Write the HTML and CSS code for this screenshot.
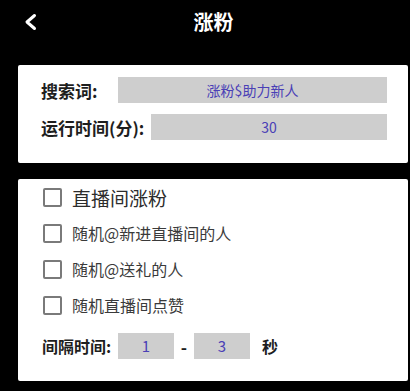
FILE: index.html
```html
<!DOCTYPE html>
<html lang="zh">
<head>
<meta charset="utf-8">
<link rel="stylesheet" href="styles.css">
</head>
<body>
<header class="topbar">
  <span class="back">
    <svg width="14" height="20" viewBox="0 0 14 20"><polyline points="10.5,2.5 3,9 10.5,15.5" fill="none" stroke="#fff" stroke-width="3" stroke-linecap="round" stroke-linejoin="round"/></svg>
  </span>
  <h1 class="title">涨粉</h1>
</header>
<section class="card card-top">
  <div class="field">
    <span class="label label-search">搜索词:</span>
    <span class="input">涨粉$助力新人</span>
  </div>
  <div class="field">
    <span class="label label-time">运行时间(分):</span>
    <span class="input">30</span>
  </div>
</section>
<section class="card card-options">
  <label class="check check-main"><span class="box"></span>直播间涨粉</label>
  <label class="check"><span class="box"></span>随机@新进直播间的人</label>
  <label class="check"><span class="box"></span>随机@送礼的人</label>
  <label class="check"><span class="box"></span>随机直播间点赞</label>
  <div class="interval">
    <span class="label label-interval">间隔时间:</span>
    <span class="input small">1</span>
    <span class="dash">-</span>
    <span class="input small">3</span>
    <span class="unit">秒</span>
  </div>
</section>
</body>
</html>
```
FILE: styles.css
```css
html, body {
  margin: 0;
  padding: 0;
  background: #000;
  font-family: "Noto Sans CJK SC", "Noto Sans", sans-serif;
}
.topbar {
  display: flex;
  align-items: center;
  height: 44px;
  margin-bottom: 21px;
}
.back {
  width: 64px;
  padding-left: 24px;
  box-sizing: border-box;
  display: flex;
  align-items: center;
  margin-top: 2px;
}
.back svg { display: block; }
.title {
  flex: 1;
  margin: 0;
  padding-right: 47px;
  text-align: center;
  color: #fff;
  font-size: 20px;
  font-weight: 700;
  line-height: 24px;
}
.card {
  background: #fff;
  margin-left: 18px;
  width: 390px;
  border-radius: 2px;
  box-sizing: border-box;
}
.card-top {
  padding: 12px 21px 23px 23px;
  display: flex;
  flex-direction: column;
  gap: 11px;
  margin-bottom: 16px;
}
.field {
  display: flex;
  align-items: center;
  height: 26px;
}
.label {
  color: #1e1e1e;
  font-weight: 700;
  font-size: 17px;
  white-space: nowrap;
}
.label-search { width: 77px; }
.label-time { width: 110px; }
.input {
  flex: 1;
  height: 26px;
  background: #cecece;
  color: #4a3fb6;
  font-size: 14px;
  line-height: 26px;
  text-align: center;
}
.card-options {
  padding: 0 0 22px 25px;
}
.check {
  display: flex;
  align-items: center;
  height: 36px;
  font-size: 16px;
  color: #3a3a3a;
}
.check-main {
  font-size: 19px;
  color: #2c2c2c;
}
.box {
  width: 19px;
  height: 19px;
  border: 2px solid #7a7a7a;
  border-radius: 2px;
  box-sizing: border-box;
  margin-right: 10px;
  flex: none;
}
.interval {
  display: flex;
  align-items: center;
  height: 26px;
  margin-top: 10px;
  margin-left: -1px;
}
.label-interval {
  width: 76px;
  font-size: 16px;
}
.input.small {
  flex: none;
  width: 56px;
  font-size: 15px;
}
.dash {
  width: 20px;
  text-align: center;
  font-weight: 700;
  font-size: 17px;
  color: #1e1e1e;
}
.unit {
  margin-left: 12px;
  font-weight: 700;
  font-size: 16px;
  color: #1e1e1e;
}
```
